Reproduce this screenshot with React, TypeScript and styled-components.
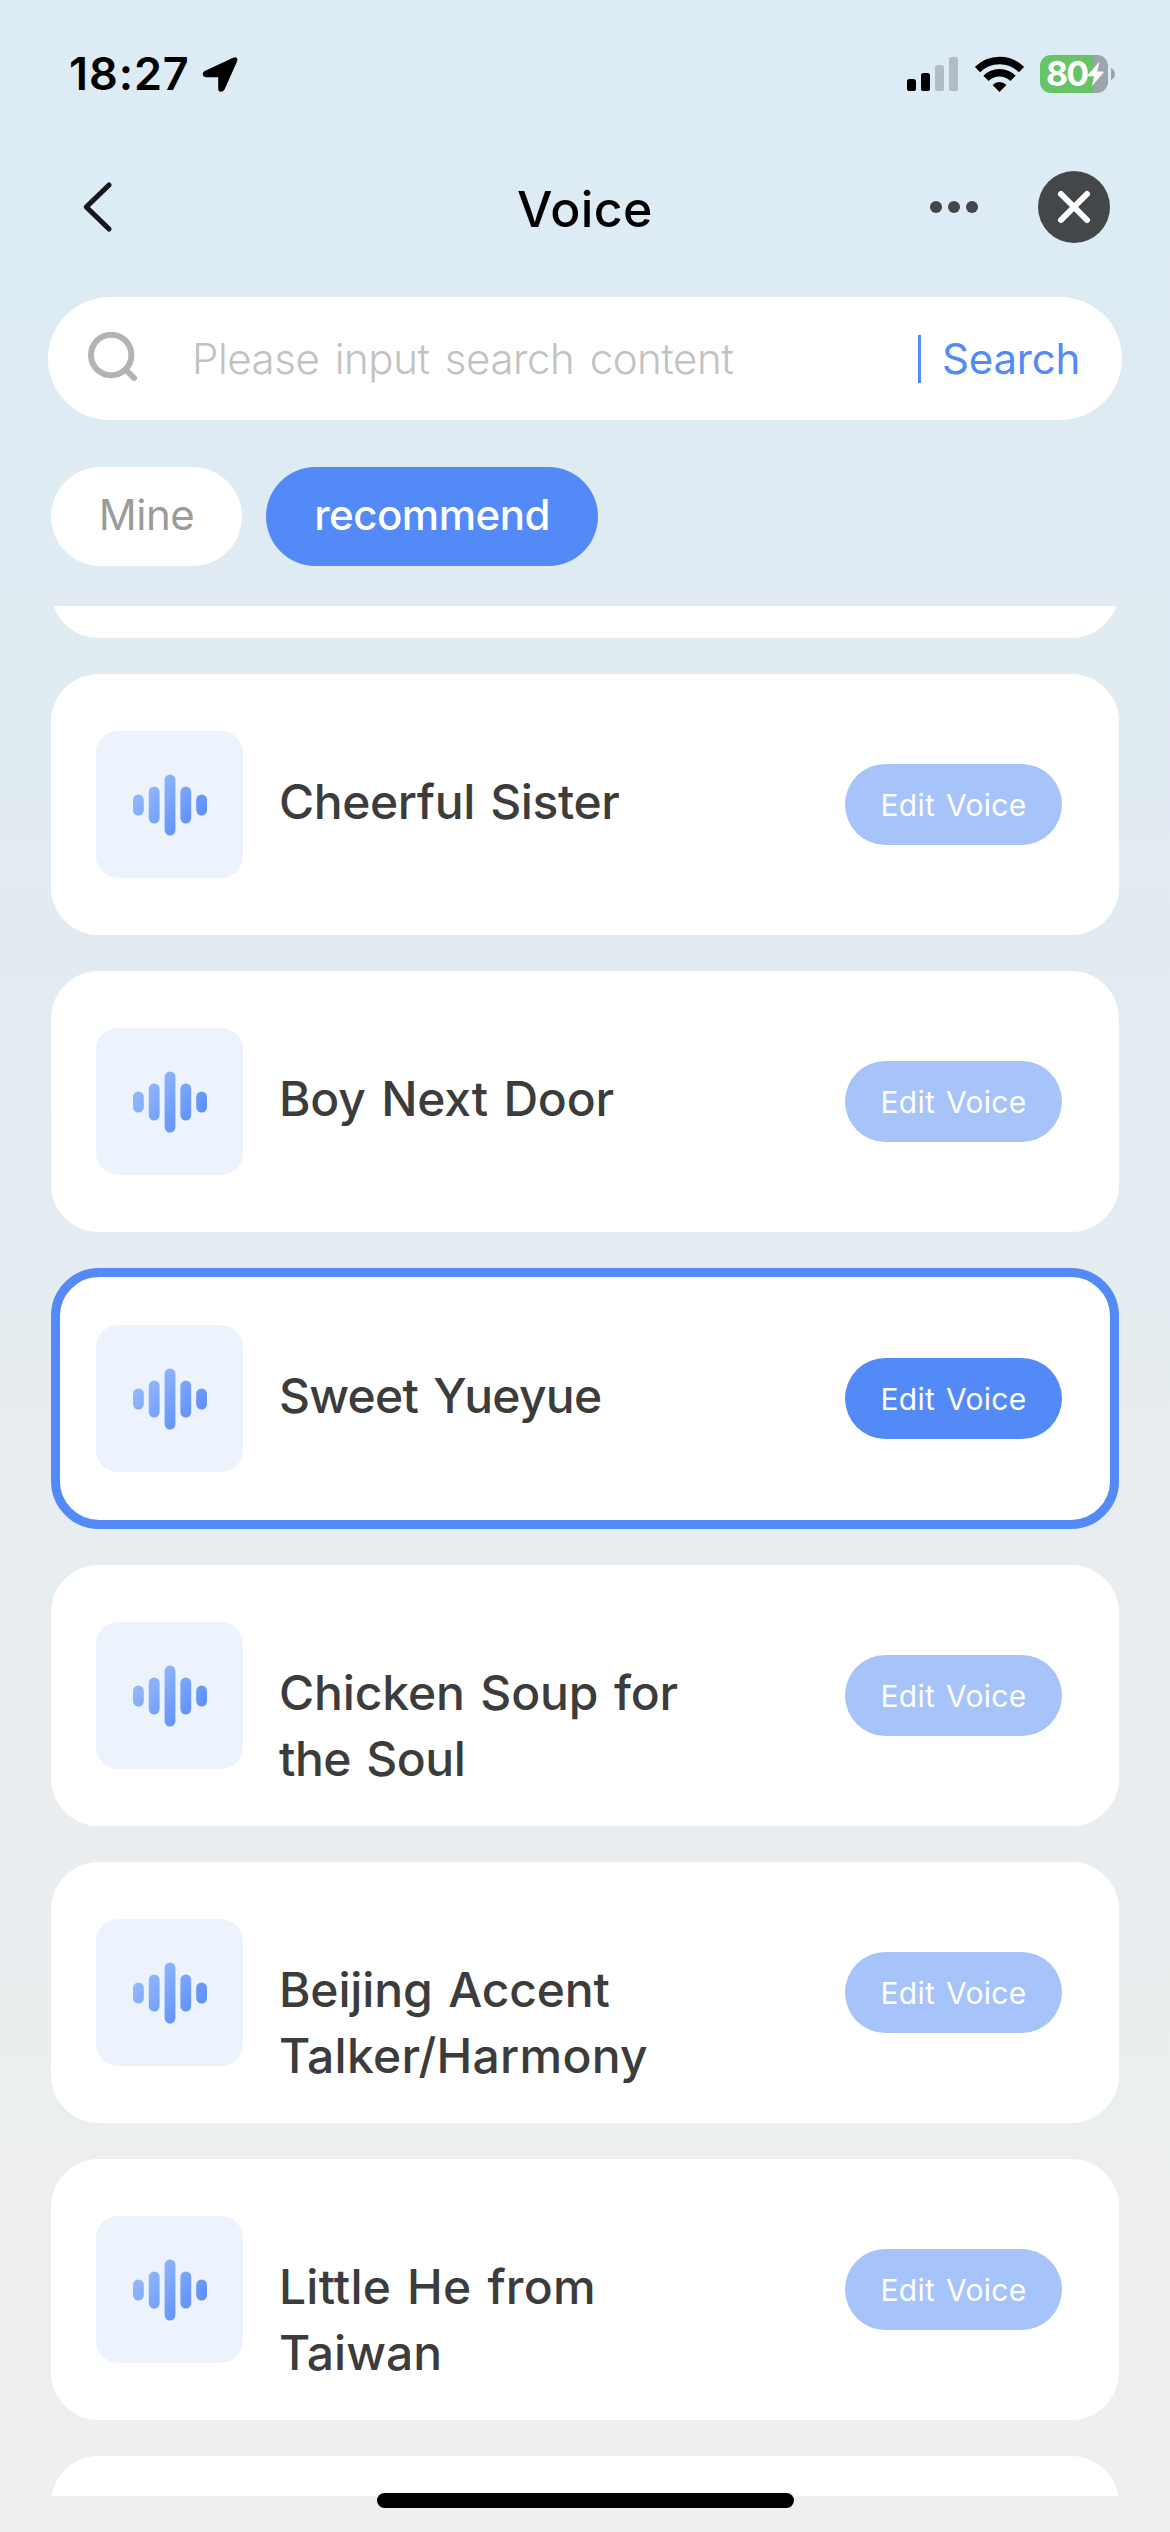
import React from 'react';
import styled, { createGlobalStyle } from 'styled-components';

const BLUE = '#548af7';

const GlobalStyle = createGlobalStyle`
  * { box-sizing: border-box; }
  body {
    margin: 0;
    font-family: Inter, "Liberation Sans", sans-serif;
    -webkit-font-smoothing: antialiased;
  }
  button { font-family: inherit; border: 0; margin: 0; }
`;

const Screen = styled.div`
  display: flex;
  flex-direction: column;
  position: relative;
  width: 1170px;
  height: 2532px;
  overflow: hidden;
  background: linear-gradient(
    180deg,
    #ddebf4 0,
    #ddebf4 240px,
    #e0ebf3 560px,
    #e3ebf2 950px,
    #e5ecf1 1260px,
    #e8edf0 1600px,
    #ebeeef 2000px,
    #eeefef 2440px,
    #eef0ef 2532px
  );
`;

const StatusBar = styled.header`
  display: flex;
  align-items: center;
  justify-content: space-between;
  height: 148px;
  padding: 0 55px 0 69px;
`;

const StatusGroup = styled.div<{ $gap: number }>`
  display: flex;
  align-items: center;
  gap: ${(p) => p.$gap}px;
`;

const Clock = styled.span`
  width: 120px;
  font-size: 45px;
  line-height: 54px;
  font-weight: 600;
  letter-spacing: 0.9px;
  white-space: nowrap;
`;

const Battery = styled.div`
  display: flex;
  align-items: center;
  gap: 3px;
`;

const BatteryBody = styled.div`
  display: flex;
  align-items: center;
  width: 68px;
  height: 38px;
  padding-left: 6px;
  border-radius: 11px;
  background: linear-gradient(90deg, #66c466 0 54px, #9ba5ab 54px);
  color: #fff;
  font-size: 34px;
  line-height: 38px;
  font-weight: 700;
  letter-spacing: -1.8px;
`;

const NavBar = styled.nav`
  display: grid;
  grid-template-columns: 1fr auto 1fr;
  align-items: center;
  height: 118px;
  padding: 0 60px 0 81px;
`;

const Title = styled.h1`
  margin: 4px 0 0 -21px;
  font-size: 50px;
  line-height: 60px;
  font-weight: 550;
  letter-spacing: 0.4px;
  color: #000;
`;

const NavActions = styled.div`
  display: flex;
  align-items: center;
  justify-content: flex-end;
  gap: 60px;
`;

const SearchBar = styled.div`
  display: flex;
  align-items: center;
  flex: none;
  height: 123px;
  margin: 31px 48px 0;
  padding: 0 44px 0 38px;
  border-radius: 61.5px;
  background: #fff;
`;

const Placeholder = styled.span`
  flex: 1;
  margin-left: 52px;
  font-size: 42px;
  line-height: 60px;
  font-weight: 350;
  letter-spacing: -0.45px;
  word-spacing: 4px;
  color: #c2c2c2;
  white-space: nowrap;
`;

const Divider = styled.i`
  width: 3px;
  height: 48px;
  background: ${BLUE};
`;

const SearchAction = styled.span`
  width: 136px;
  margin-left: 21px;
  font-size: 42px;
  line-height: 60px;
  font-weight: 370;
  letter-spacing: -0.2px;
  color: ${BLUE};
  white-space: nowrap;
`;

const Tabs = styled.div`
  display: flex;
  flex: none;
  gap: 24px;
  margin: 47px 51px 0;
`;

const Tab = styled.button<{ $active?: boolean; $width: number }>`
  width: ${(p) => p.$width}px;
  height: 99px;
  padding: 0 0 3px;
  border-radius: 49.5px;
  background: ${(p) => (p.$active ? BLUE : '#fff')};
  color: ${(p) => (p.$active ? '#fff' : '#9b9b9b')};
  font-size: 42px;
  line-height: 60px;
  font-weight: ${(p) => (p.$active ? 530 : 370)};
  letter-spacing: -0.5px;
`;

const ScrollArea = styled.main`
  flex: none;
  height: 1890px;
  margin-top: 40px;
  overflow: hidden;
`;

const List = styled.div`
  display: flex;
  flex-direction: column;
  gap: 36px;
  margin-top: -229px;
  padding: 0 51px;
`;

const Card = styled.article<{ $selected?: boolean }>`
  display: flex;
  align-items: flex-start;
  flex: none;
  height: 261px;
  padding: 48px;
  padding-left: 36px;
  border: 9px solid ${(p) => (p.$selected ? BLUE : '#fff')};
  border-radius: 48px;
  background: #fff;
`;

const IconTile = styled.div`
  display: flex;
  align-items: center;
  justify-content: center;
  width: 147px;
  height: 147px;
  border-radius: 22px;
  background: #ecf3fd;
`;

const Name = styled.h2`
  flex: 1;
  margin: 38px 0 0 36px;
  font-size: 48px;
  line-height: 66px;
  font-weight: 500;
  word-spacing: 3px;
  color: #3c3c3c;
`;

const NameLine = styled.span<{ $tracking: number }>`
  display: block;
  letter-spacing: ${(p) => p.$tracking}px;
  white-space: nowrap;
`;

const EditButton = styled.button<{ $active?: boolean }>`
  align-self: center;
  width: 217px;
  height: 81px;
  padding: 0;
  border-radius: 40.5px;
  background: ${(p) => (p.$active ? BLUE : '#a6c3fa')};
  color: #fff;
  font-size: 30px;
  line-height: 40px;
  font-weight: 430;
  letter-spacing: 0.3px;
  word-spacing: 2px;
`;

const HomeIndicator = styled.div`
  position: absolute;
  left: 377px;
  bottom: 24px;
  width: 417px;
  height: 15px;
  border-radius: 7.5px;
  background: #000;
`;

const LocationArrow = () => (
  <svg width="37" height="37" viewBox="0 0 37 37">
    <path
      d="M3 15.7 L31.5 2.6 Q35.6 1 34.4 5 L21.8 33.2 Q20.8 35 19 35 Q17 35 17 33 L17 20.5 L4 20.4 Q1.6 20 1.6 18 Q1.6 16.4 3 15.7Z"
      fill="#000"
      stroke="#000"
      strokeWidth="1.6"
      strokeLinejoin="round"
    />
  </svg>
);

const Signal = () => (
  <svg width="51" height="34" viewBox="0 0 51 34">
    <rect x="0" y="22" width="9" height="12" rx="2.6" fill="#000" />
    <rect x="14" y="16" width="9" height="18" rx="2.6" fill="#000" />
    <rect x="28" y="8" width="9" height="26" rx="2.6" fill="#b1bcc3" />
    <rect x="42" y="0" width="9" height="34" rx="2.6" fill="#b1bcc3" />
  </svg>
);

const Wifi = () => (
  <svg width="49" height="36" viewBox="0 0 49 36">
    <g fill="none" stroke="#000" strokeWidth="7.4">
      <path d="M2.5 13.6 A31 31 0 0 1 46.5 13.6" />
      <path d="M11 22.4 A19 19 0 0 1 38 22.4" />
    </g>
    <path d="M24.5 36 L17.6 28.9 A9.8 9.8 0 0 1 31.4 28.9Z" fill="#000" />
  </svg>
);

const Bolt = () => (
  <svg width="18" height="26" viewBox="0 0 18 26">
    <path d="M12.6 0.6 L0.8 14 Q0.2 15.2 1.6 15.2 L7.2 15.2 L4.8 25.2 L16.6 11.6 Q17.2 10.4 15.8 10.4 L10.2 10.4Z" fill="#fff" />
  </svg>
);

const BatteryNub = () => (
  <svg width="4" height="12" viewBox="0 0 4 12">
    <path d="M0 0 Q4 2 4 6 Q4 10 0 12Z" fill="#9ba5ab" />
  </svg>
);

const BackIcon = () => (
  <svg width="34" height="54" viewBox="0 0 34 54">
    <path d="M28 5 L5.3 27 L28 49" fill="none" stroke="#17181a" strokeWidth="5.2" strokeLinecap="round" strokeLinejoin="round" />
  </svg>
);

const MoreIcon = () => (
  <svg width="48" height="12" viewBox="0 0 48 12" fill="#444749">
    <circle cx="6" cy="6" r="6" />
    <circle cx="24" cy="6" r="6" />
    <circle cx="42" cy="6" r="6" />
  </svg>
);

const CloseIcon = () => (
  <svg width="72" height="72" viewBox="0 0 72 72">
    <circle cx="36" cy="36" r="36" fill="#444749" />
    <path d="M23 23 L49 49 M49 23 L23 49" stroke="#fff" strokeWidth="6" strokeLinecap="round" />
  </svg>
);

const SearchIcon = () => (
  <svg width="54" height="54" viewBox="0 0 54 54" fill="none" stroke="#b3b3b3" strokeWidth="6">
    <circle cx="25.2" cy="23" r="20.2" />
    <path d="M40 38 L48 46" strokeLinecap="round" />
  </svg>
);

const BARS = [
  { x: 0, h: 21 },
  { x: 15.8, h: 37 },
  { x: 31.6, h: 61 },
  { x: 47.4, h: 37 },
  { x: 63.2, h: 21 },
];

const VoiceIcon = () => (
  <svg width="74" height="62" viewBox="0 0 74 62">
    <defs>
      <linearGradient id="wave" gradientUnits="userSpaceOnUse" x1="8" y1="2" x2="66" y2="60">
        <stop offset="0" stopColor="#9bbefd" />
        <stop offset="1" stopColor="#5589f6" />
      </linearGradient>
    </defs>
    {BARS.map((b) => (
      <rect key={b.x} x={b.x} y={31 - b.h / 2} width="10.8" height={b.h} rx="5.4" fill="url(#wave)" />
    ))}
  </svg>
);

type Line = { text: string; tracking: number };

const VOICES: { lines: Line[]; selected?: boolean }[] = [
  { lines: [{ text: 'Cheerful Sister', tracking: -0.4 }] },
  { lines: [{ text: 'Boy Next Door', tracking: -0.2 }] },
  { lines: [{ text: 'Sweet Yueyue', tracking: -0.7 }], selected: true },
  {
    lines: [
      { text: 'Chicken Soup for', tracking: -0.15 },
      { text: 'the Soul', tracking: -0.5 },
    ],
  },
  {
    lines: [
      { text: 'Beijing Accent', tracking: -0.15 },
      { text: 'Talker/Harmony', tracking: 0.25 },
    ],
  },
  {
    lines: [
      { text: 'Little He from', tracking: 0.2 },
      { text: 'Taiwan', tracking: 0 },
    ],
  },
];

export default function App() {
  return (
    <Screen>
      <GlobalStyle />
      <StatusBar>
        <StatusGroup $gap={13}>
          <Clock>18:27</Clock>
          <LocationArrow />
        </StatusGroup>
        <StatusGroup $gap={16.5}>
          <Signal />
          <Wifi />
          <Battery>
            <BatteryBody>
              80
              <Bolt />
            </BatteryBody>
            <BatteryNub />
          </Battery>
        </StatusGroup>
      </StatusBar>
      <NavBar>
        <BackIcon />
        <Title>Voice</Title>
        <NavActions>
          <MoreIcon />
          <CloseIcon />
        </NavActions>
      </NavBar>
      <SearchBar>
        <SearchIcon />
        <Placeholder>Please input search content</Placeholder>
        <Divider />
        <SearchAction>Search</SearchAction>
      </SearchBar>
      <Tabs>
        <Tab $width={191}>Mine</Tab>
        <Tab $width={332} $active>recommend</Tab>
      </Tabs>
      <ScrollArea>
        <List>
          <Card />
          {VOICES.map((v) => (
            <Card key={v.lines[0].text} $selected={v.selected}>
              <IconTile>
                <VoiceIcon />
              </IconTile>
              <Name>
                {v.lines.map((line) => (
                  <NameLine key={line.text} $tracking={line.tracking}>
                    {line.text}
                  </NameLine>
                ))}
              </Name>
              <EditButton $active={v.selected}>Edit Voice</EditButton>
            </Card>
          ))}
          <Card />
        </List>
      </ScrollArea>
      <HomeIndicator />
    </Screen>
  );
}
